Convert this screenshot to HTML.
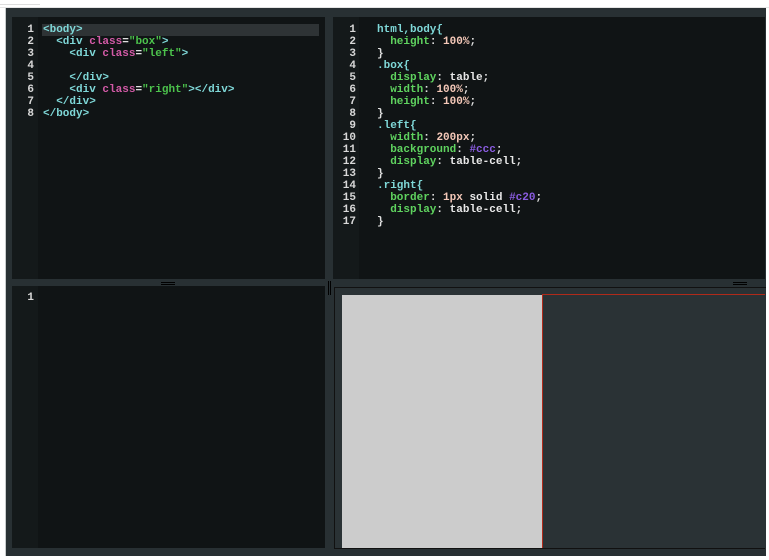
<!DOCTYPE html>
<html><head><style>
body{margin:0;width:769px;height:560px;background:#fff;position:relative;overflow:hidden;font-family:"Liberation Mono",monospace;font-size:11px;font-weight:bold}
.a{position:absolute}
.frame{left:5px;top:8px;width:760px;height:548px;background:#283033;border-left:1px solid #c8cccd}
.ed{background:#101415}
.gut{background:#14191a}
pre{margin:0;font:inherit;line-height:12px;position:absolute;white-space:pre}
.n{color:#d8d8d8;text-align:right}
.t{color:#7fd8d8}.at{color:#d25aa6}.s{color:#4cc34c}.p{color:#5fd35f}.v{color:#e8e8e8}.num{color:#f4c8b8}.c{color:#8a5ce0}.w{color:#e0e0e0}
</style></head><body>
<div class="a" style="left:0;top:4px;width:40px;height:1px;background:#ddd"></div>
<div class="a" style="left:0;top:7px;width:769px;height:1px;background:#e4e4e4"></div>
<div class="a frame"></div>
<!-- top left -->
<div class="a ed" style="left:12px;top:17px;width:313px;height:262px"></div>
<div class="a gut" style="left:12px;top:17px;width:26px;height:262px"></div>
<div class="a" style="left:42px;top:24px;width:277px;height:12px;background:#2e3335"></div>
<pre class="a n" style="left:14px;top:24px;width:20px">1
2
3
4
5
6
7
8</pre>
<pre class="a" style="left:43px;top:24px"><span class="t">&lt;body&gt;</span>
  <span class="t">&lt;div</span> <span class="at">class</span><span class="w">=</span><span class="s">"box"</span><span class="t">&gt;</span>
    <span class="t">&lt;div</span> <span class="at">class</span><span class="w">=</span><span class="s">"left"</span><span class="t">&gt;</span>

    <span class="t">&lt;/div&gt;</span>
    <span class="t">&lt;div</span> <span class="at">class</span><span class="w">=</span><span class="s">"right"</span><span class="t">&gt;&lt;/div&gt;</span>
  <span class="t">&lt;/div&gt;</span>
<span class="t">&lt;/body&gt;</span></pre>
<!-- top right -->
<div class="a ed" style="left:333px;top:17px;width:432px;height:262px"></div>
<div class="a gut" style="left:333px;top:17px;width:26px;height:262px"></div>
<pre class="a n" style="left:335px;top:24px;width:21px">1
2
3
4
5
6
7
8
9
10
11
12
13
14
15
16
17</pre>
<pre class="a" style="left:377px;top:24px;color:#7fd8d8"><span class="t">html,body{</span>
  <span class="p">height</span><span class="w">:</span> <span class="num">100%</span><span class="w">;</span>
<span class="w">}</span>
<span class="t">.box{</span>
  <span class="p">display</span><span class="w">:</span> <span class="v">table</span><span class="w">;</span>
  <span class="p">width</span><span class="w">:</span> <span class="num">100%</span><span class="w">;</span>
  <span class="p">height</span><span class="w">:</span> <span class="num">100%</span><span class="w">;</span>
<span class="w">}</span>
<span class="t">.left{</span>
  <span class="p">width</span><span class="w">:</span> <span class="num">200px</span><span class="w">;</span>
  <span class="p">background</span><span class="w">:</span> <span class="c">#ccc</span><span class="w">;</span>
  <span class="p">display</span><span class="w">:</span> <span class="v">table-cell</span><span class="w">;</span>
<span class="w">}</span>
<span class="t">.right{</span>
  <span class="p">border</span><span class="w">:</span> <span class="num">1px</span> <span class="v">solid</span> <span class="c">#c20</span><span class="w">;</span>
  <span class="p">display</span><span class="w">:</span> <span class="v">table-cell</span><span class="w">;</span>
<span class="w">}</span></pre>
<!-- dividers handles -->
<div class="a" style="left:161px;top:282px;width:14px;height:1px;background:#000"></div>
<div class="a" style="left:161px;top:284px;width:14px;height:1px;background:#000"></div>
<div class="a" style="left:328px;top:281px;width:1px;height:14px;background:#000"></div>
<div class="a" style="left:330px;top:281px;width:1px;height:14px;background:#000"></div>
<div class="a" style="left:733px;top:282px;width:14px;height:1px;background:#000"></div>
<div class="a" style="left:733px;top:284px;width:14px;height:1px;background:#000"></div>
<!-- bottom left -->
<div class="a ed" style="left:12px;top:286px;width:313px;height:262px"></div>
<div class="a gut" style="left:12px;top:286px;width:26px;height:262px"></div>
<pre class="a n" style="left:14px;top:292px;width:20px">1</pre>
<!-- bottom right -->
<div class="a" style="left:334px;top:287px;width:431px;height:261px;background:#2a3235;border-left:1px solid #111;border-top:1px solid #111"></div>
<div class="a" style="left:342px;top:295px;width:200px;height:253px;background:#cccccc"></div>
<div class="a" style="left:542px;top:294px;width:223px;height:254px;border-left:1px solid #b02a1a;border-top:1px solid #b02a1a;box-sizing:border-box;background:#2a3235"></div>
<div class="a" style="left:334px;top:548px;width:431px;height:1px;background:#111"></div>
</body></html>
